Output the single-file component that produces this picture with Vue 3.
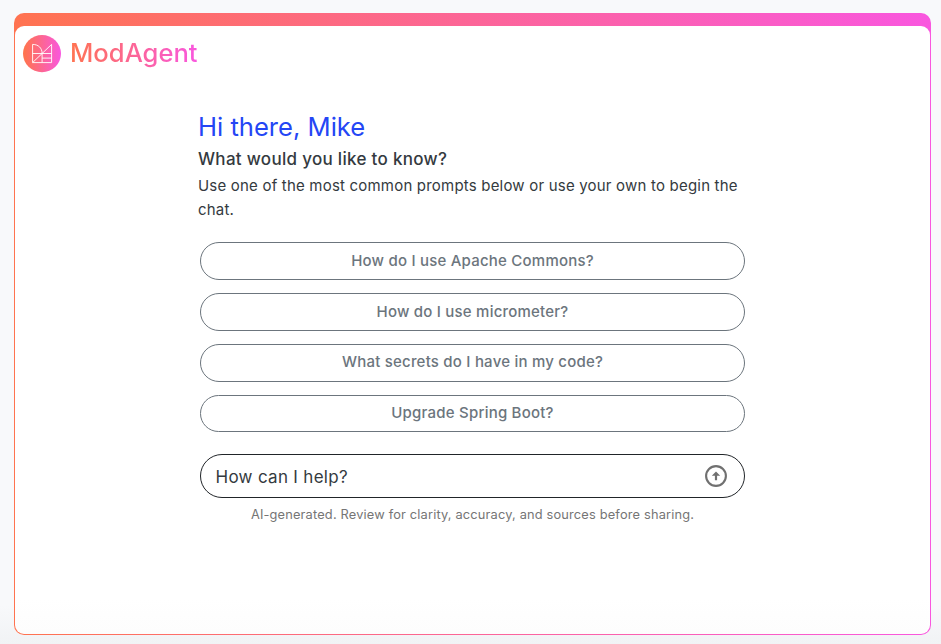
<script setup>
const prompts = [
  'How do I use Apache Commons?',
  'How do I use micrometer?',
  'What secrets do I have in my code?',
  'Upgrade Spring Boot?',
]
</script>

<template>
  <div class="page">
    <section class="card">
      <div class="panel">
        <header class="brand">
          <svg class="logo" width="38" height="38" viewBox="0 0 38 38">
            <defs>
              <linearGradient id="logoFill" x1="0" y1="0" x2="1" y2="0">
                <stop offset="0.05" stop-color="#ff7350" />
                <stop offset="1" stop-color="#f957df" />
              </linearGradient>
            </defs>
            <ellipse cx="19" cy="18.6" rx="19" ry="18.6" fill="url(#logoFill)" />
            <path
              d="M9.6 9.4V27.6H28.6V9.4L9.6 27.6M9.6 9.4C15.4 9.4 19.1 13 19.1 18.5V27.6M9.6 18.5H28.6M19.1 23.1H28.6"
              fill="none" stroke="#fff" stroke-opacity="0.9" stroke-width="1"
            />
          </svg>
          <span class="name">ModAgent</span>
        </header>
        <main class="chat">
          <h1>Hi there, Mike</h1>
          <h2>What would you like to know?</h2>
          <p class="intro">Use one of the most common prompts below or use your own to begin the chat.</p>
          <div class="prompts">
            <button v-for="p in prompts" :key="p" type="button">{{ p }}</button>
          </div>
          <div class="ask">
            <span>How can I help?</span>
            <svg width="24" height="24" viewBox="0 0 24 24">
              <circle cx="12" cy="12" r="9.9" fill="none" stroke="#707070" stroke-width="2.1" />
              <path d="M12 7.4L16.2 11.8H13.1V16.2H10.9V11.8H7.8Z" fill="#707070" />
            </svg>
          </div>
          <p class="note">AI-generated. Review for clarity, accuracy, and sources before sharing.</p>
        </main>
      </div>
    </section>
  </div>
</template>

<style>
body { background: #f8f9fb; }
</style>

<style scoped>
.page {
  box-sizing: border-box;
  height: 644px;
  padding: 13px 10px 9px 14px;
  background: linear-gradient(#f8f9fb 94%, #f1f3f5);
  font-family: Inter, "Liberation Sans", sans-serif;
  overflow: hidden;
}
.card {
  box-sizing: border-box;
  height: 622px;
  padding: 13px 1px 1px;
  border-radius: 10px;
  background: linear-gradient(90deg, #ff7350, #f957df);
}
.panel {
  box-sizing: border-box;
  height: 608px;
  padding: 9px 8px;
  border-radius: 9px;
  background: linear-gradient(#fff 94%, #fdfdfd);
}
.brand {
  display: flex;
  height: 38px;
  gap: 9px;
}
.logo { flex: none; }
.name {
  font-size: 25.6px;
  line-height: 36px;
  font-weight: 500;
  background: linear-gradient(90deg, #ff7350, #f957df);
  -webkit-background-clip: text;
  background-clip: text;
  color: transparent;
}
.chat {
  width: 549px;
  margin: 37px 0 0 175px;
  color: #343a40;
}
h1 {
  margin: 0;
  font-size: 25.6px;
  line-height: 34px;
  font-weight: 400;
  color: #2446f5;
}
h2 {
  margin: 3px 0 0;
  font-size: 17px;
  line-height: 24px;
  font-weight: 500;
  letter-spacing: 0.3px;
}
.intro {
  margin: 3px 0 0;
  font-size: 15px;
  line-height: 24px;
  letter-spacing: 0.2px;
}
.prompts {
  display: grid;
  gap: 13.1px;
  margin: 20.3px 2px 0;
}
button {
  box-sizing: border-box;
  height: 37.7px;
  padding: 0 0 0.7px;
  border: 1px solid #6c757d;
  border-radius: 19px;
  background: transparent;
  font: 500 15px/22px Inter, "Liberation Sans", sans-serif;
  letter-spacing: 0.22px;
  color: #6c757d;
}
.ask {
  box-sizing: border-box;
  display: flex;
  align-items: center;
  justify-content: space-between;
  height: 44px;
  margin: 21.7px 2px 0;
  padding: 0 16px 0 14.5px;
  border: 1px solid #212529;
  border-radius: 22px;
  font-size: 17px;
  letter-spacing: 0.3px;
}
.ask span { padding-top: 1.6px; }
.note {
  margin: 7px 0 0;
  font-size: 12.8px;
  line-height: 20px;
  letter-spacing: 0.18px;
  text-align: center;
  color: #757575;
}
</style>
